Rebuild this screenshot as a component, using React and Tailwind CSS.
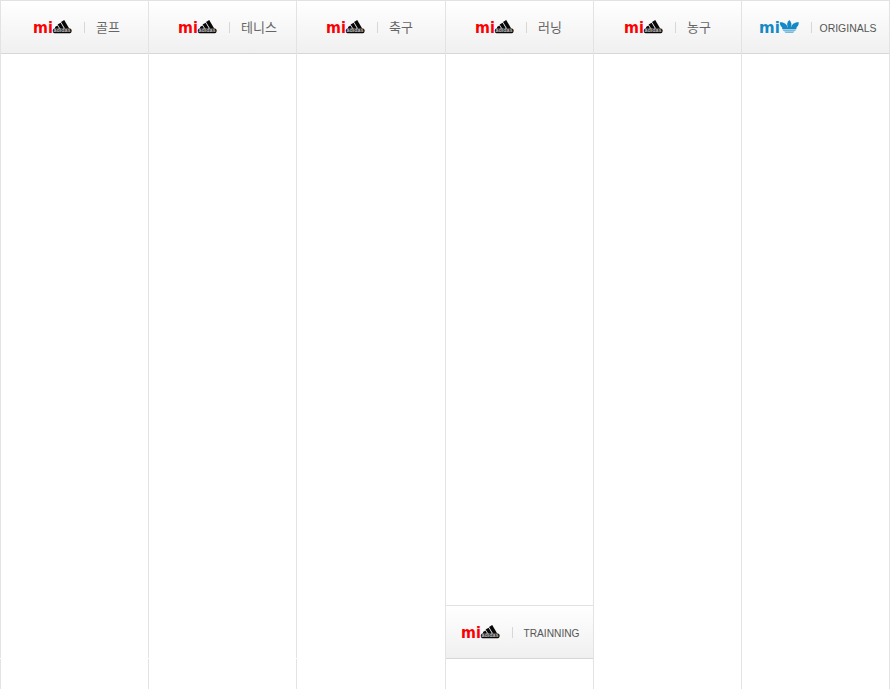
const HANGUL = 'font-["Liberation_Sans","Noto_Sans_CJK_KR",sans-serif] text-[13px] font-normal leading-[14px] pt-[2px]';
const LATIN = 'font-["Liberation_Sans",sans-serif] text-[10.5px] leading-[14px]';

const COLUMNS = [
  { label: '골프', width: 'w-[148px]', pad: 'pl-8', text: HANGUL, gap: 'ml-[11px]', notch: true },
  { label: '테니스', width: 'w-[148px]', pad: 'pl-[29px]', text: HANGUL, gap: 'ml-[11px]', notch: true },
  { label: '축구', width: 'w-[149px]', pad: 'pl-[29px]', text: HANGUL, gap: 'ml-[11px]', notch: true },
  { label: '러닝', width: 'w-[148px]', pad: 'pl-[29px]', text: HANGUL, gap: 'ml-[11px]', training: true },
  { label: '농구', width: 'w-[148px]', pad: 'pl-[30px]', text: HANGUL, gap: 'ml-[11px]' },
  { label: 'ORIGINALS', width: 'w-[149px] border-r border-r-[#e3e3e3]', pad: 'pl-[17px]', text: LATIN, gap: 'ml-[7px]', originals: true, length: 57 },
];

function PerformanceLogo() {
  return (
    <svg className="h-[22px] w-[51px] shrink-0 overflow-visible" viewBox="0 -2 51 22" role="img" aria-label="mi adidas">
      <text x="0" y="15" textLength="19.8" lengthAdjust="spacingAndGlyphs" className='fill-[#fa0000] font-["DejaVu_Sans",sans-serif] text-[16px] font-bold'>mi</text>
      <g fill="#080808">
        <path d="M22 8.9 24.4 7.5 26.2 10.5H22.2Z" />
        <path d="M24.6 6.4 27.6 4.7 31 10.5H27.1Z" />
        <path d="M28 3.9 31.2 2.1 36.2 10.5H32Z" />
        <rect x="19.9" y="10.6" width="18.6" height="4.6" rx="1.6" />
      </g>
      <text x="20.6" y="14.4" textLength="17" lengthAdjust="spacingAndGlyphs" className='fill-[#c8c8c8] font-["Liberation_Sans",sans-serif] text-[4.5px] font-bold'>adidas</text>
    </svg>
  );
}

function TrefoilLogo() {
  return (
    <svg className="h-[22px] w-[52px] shrink-0 overflow-visible" viewBox="0 -2 52 22" role="img" aria-label="mi originals">
      <text x="0" y="15" textLength="20.8" lengthAdjust="spacingAndGlyphs" className='fill-[#1489c6] font-["DejaVu_Sans",sans-serif] text-[16px] font-bold'>mi</text>
      <g fill="#1489c6">
        <path d="M30.3 2C32.8 4.3 33 7 31.6 10H29C27.6 7 27.8 4.3 30.3 2Z" />
        <path d="M20.8 4.2C25.5 4 28 6.2 28.7 10H24C22 8.7 20.8 7 20.8 4.2Z" />
        <path d="M39.8 4.2C35.1 4 32.6 6.2 31.9 10H36.6C38.6 8.7 39.8 7 39.8 4.2Z" />
        <path d="M22.9 9.2H37.7L37.3 11H23.3Z" />
        <path d="M23.3 11.6H37.3L36.2 12.8H24.4Z" opacity=".75" />
        <path d="M25 13.4H35.6L34 14.8H26.6Z" opacity=".75" />
      </g>
    </svg>
  );
}

function Tab({ label, pad, text, gap, originals, length }) {
  return (
    <div className={`flex h-[54px] shrink-0 items-center border-t border-b border-t-[#e2e2e2] border-b-[#d7d7d7] bg-linear-to-b from-white to-[#f0f0f0] ${pad}`}>
      {originals ? <TrefoilLogo /> : <PerformanceLogo />}
      <span className="h-[11px] w-px shrink-0 bg-[#d7d7d7]" />
      {length ? (
        <svg className={`h-[16px] w-[60px] shrink-0 overflow-visible ${gap}`}>
          <text x="0.5" y="12.8" textLength={length} lengthAdjust="spacingAndGlyphs" className={`fill-[#555] ${text}`}>{label}</text>
        </svg>
      ) : (
        <span className={`whitespace-nowrap text-[#666] ${gap} ${text}`}>{label}</span>
      )}
    </div>
  );
}

export default function App() {
  return (
    <div className="flex h-[689px] w-[890px] overflow-hidden bg-white">
      {COLUMNS.map((column) => (
        <section key={column.label} className={`flex shrink-0 flex-col border-l border-l-[#e3e3e3] ${column.width}`}>
          <Tab {...column} />
          {column.training && (
            <div className="mt-[551px]">
              <Tab label="TRAINNING" pad="pl-[15px]" text={LATIN} gap="ml-2.5" length={56} />
            </div>
          )}
          {column.notch && <span className="mt-[604px] -ml-px h-px w-px bg-white" />}
        </section>
      ))}
    </div>
  );
}
